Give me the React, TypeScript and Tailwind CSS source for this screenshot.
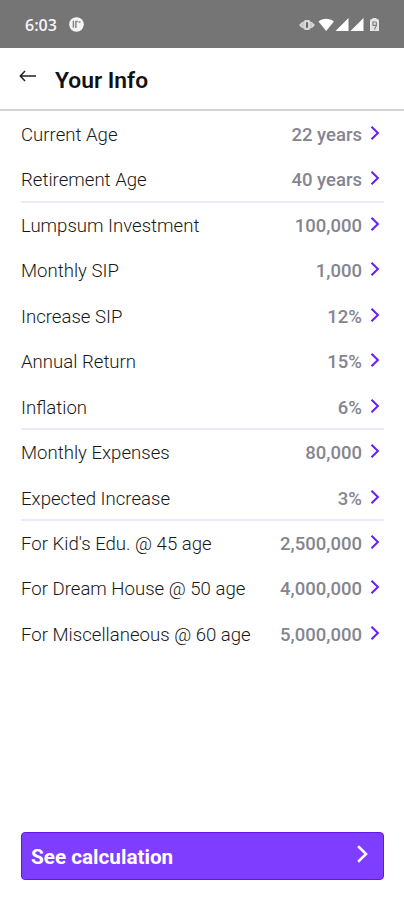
import { clsx } from 'clsx';

type InfoRow = { label: string; value: string };

const groups: InfoRow[][] = [
  [
    { label: 'Current Age', value: '22 years' },
    { label: 'Retirement Age', value: '40 years' },
  ],
  [
    { label: 'Lumpsum Investment', value: '100,000' },
    { label: 'Monthly SIP', value: '1,000' },
    { label: 'Increase SIP', value: '12%' },
    { label: 'Annual Return', value: '15%' },
    { label: 'Inflation', value: '6%' },
  ],
  [
    { label: 'Monthly Expenses', value: '80,000' },
    { label: 'Expected Increase', value: '3%' },
  ],
  [
    { label: "For Kid's Edu. @ 45 age", value: '2,500,000' },
    { label: 'For Dream House @ 50 age', value: '4,000,000' },
    { label: 'For Miscellaneous @ 60 age', value: '5,000,000' },
  ],
];

function Chevron({ className }: { className?: string }) {
  return (
    <svg viewBox="0 0 10 16" fill="none" stroke="currentColor" strokeWidth="2" className={className}>
      <path d="M1.500 1.800 7.900 8l-6.400 6.200" />
    </svg>
  );
}

function StatusBar() {
  return (
    <div className="flex h-12 items-center justify-between bg-[#757575] pl-[25px] pr-[22px] pt-[2px] text-[#f5f5f5]">
      <div className="flex items-center gap-[11px]">
        <span className="w-[33px] whitespace-nowrap font-['Open_Sans',sans-serif] text-[16px] font-semibold leading-5">6:03</span>
        <svg viewBox="0 0 15 15" className="mb-px h-[15px] w-[15px]">
          <circle cx="7.500" cy="7.500" r="7.300" fill="currentColor" />
          <path d="M4.400 3.800v7M6.900 11V4.400h1.900M9.500 5h2" fill="none" stroke="#858585" strokeWidth="1.500" />
        </svg>
      </div>
      <svg viewBox="0 0 84 16" className="h-4 w-[84px]">
        {/* vibrate */}
        <path d="M1 8l3-3h1l2-2h4l2 2h1l3 3-3 3h-1l-2 2H7l-2-2H4z" fill="#d6d6d6" />
        <path d="M5 5.500v5M13 5.500v5" stroke="#bdbdbd" strokeWidth="1" />
        <rect x="8" y="5" width="2" height="6" rx="1" fill="#686868" />
        {/* wifi */}
        <path d="M20.500 4.400C24.700 .9 31.700 .9 35.900 4.400L28.200 14z" fill="#fff" />
        {/* signal, both sims */}
        <path d="M50.500 1v13h-13zM65.500 1v13h-13z" fill="#fff" />
        {/* battery */}
        <path d="M72 3.500Q72 2 73.500 2H74.500V1h4v1h1Q81 2 81 3.500V14H72z" fill="#e4e4e4" />
        <path d="M78.400 5.200v3.200l-2 4M78.400 8.300h-3.400V5h3.400" fill="none" stroke="#808080" strokeWidth="1.200" />
      </svg>
    </div>
  );
}

function Row({ row, divider }: { row: InfoRow; divider: boolean }) {
  return (
    <li
      className={clsx(
        'flex h-[45.45px] items-center justify-between border-b-2 pr-1',
        divider ? 'border-[#ecebfd]' : 'border-transparent'
      )}
    >
      <span className="whitespace-nowrap pt-[3px] text-[18.6px] font-[350] leading-6 text-[#181818]">{row.label}</span>
      <span className="flex items-center">
        <span className="pt-[3px] text-[18.5px] font-medium leading-6 text-[#85858f]">{row.value}</span>
        <Chevron className="mb-px ml-2 h-4 w-[10px] text-[#6a1df5]" />
      </span>
    </li>
  );
}

export default function App() {
  return (
    <div className="flex h-[900px] w-[404px] flex-col overflow-hidden bg-white font-[Roboto,sans-serif]">
      <StatusBar />
      <header className="flex h-[63px] items-center border-b-2 border-[#d5d5d5] pl-[19px]">
        <svg viewBox="0 0 18 12" fill="none" stroke="#202020" strokeWidth="1.500" className="mb-[6px] h-3 w-[18px]">
          <path d="M17 6H1.500M6 1 1.300 6 6 11" />
        </svg>
        <h1 className="ml-[18px] pt-[5px] text-[22.8px] font-semibold leading-7 text-[#111]">Your Info</h1>
      </header>
      <ul className="ml-[21px] mr-5 flex-1 pt-[0.8px]">
        {groups.map((group, g) =>
          group.map((row, i) => (
            <Row key={row.label} row={row} divider={i === group.length - 1 && g < groups.length - 1} />
          ))
        )}
      </ul>
      <button className="ml-[21px] mr-5 mb-5 flex h-12 items-center justify-between rounded-[4px] border border-[#6514ee] bg-[#7f3dff] pl-[9px] pr-[14px] text-white">
        <span className="pt-[2px] text-[20.7px] font-bold leading-6">See calculation</span>
        <Chevron className="mb-[4px] h-5 w-[13px]" />
      </button>
    </div>
  );
}
